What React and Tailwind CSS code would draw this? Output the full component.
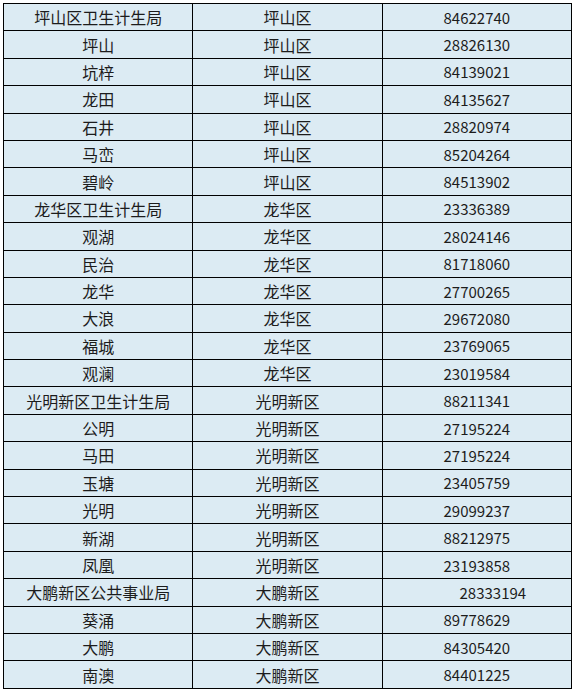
const rows = [
  ["坪山区卫生计生局", "坪山区", "84622740"],
  ["坪山", "坪山区", "28826130"],
  ["坑梓", "坪山区", "84139021"],
  ["龙田", "坪山区", "84135627"],
  ["石井", "坪山区", "28820974"],
  ["马峦", "坪山区", "85204264"],
  ["碧岭", "坪山区", "84513902"],
  ["龙华区卫生计生局", "龙华区", "23336389"],
  ["观湖", "龙华区", "28024146"],
  ["民治", "龙华区", "81718060"],
  ["龙华", "龙华区", "27700265"],
  ["大浪", "龙华区", "29672080"],
  ["福城", "龙华区", "23769065"],
  ["观澜", "龙华区", "23019584"],
  ["光明新区卫生计生局", "光明新区", "88211341"],
  ["公明", "光明新区", "27195224"],
  ["马田", "光明新区", "27195224"],
  ["玉塘", "光明新区", "23405759"],
  ["光明", "光明新区", "29099237"],
  ["新湖", "光明新区", "88212975"],
  ["凤凰", "光明新区", "23193858"],
  ["大鹏新区公共事业局", "大鹏新区", "28333194", true],
  ["葵涌", "大鹏新区", "89778629"],
  ["大鹏", "大鹏新区", "84305420"],
  ["南澳", "大鹏新区", "84401225"],
];

export default function App() {
  return (
    <div className="bg-white w-[575px] h-[692px] pt-[3px] pl-[3px]">
      <table
        className="border-collapse table-fixed w-[569px] bg-[#dcebf3] text-[#1c1c1c]"
        style={{ fontFamily: '"Noto Sans CJK SC", "Liberation Sans", sans-serif' }}
      >
        <tbody>
          {rows.map(([unit, area, phone, shifted], i) => (
            <tr key={i} className="h-[27.4px]">
              <td className="border border-black p-0 text-center text-[16px] leading-none whitespace-nowrap">
                {unit}
              </td>
              <td className="border border-black p-0 text-center text-[16px] leading-none">
                {area}
              </td>
              <td
                className={
                  shifted
                    ? "border border-black p-0 pl-8 text-center text-[15px] leading-none"
                    : "border border-black p-0 text-center text-[15px] leading-none"
                }
              >
                {phone}
              </td>
            </tr>
          ))}
        </tbody>
      </table>
    </div>
  );
}
